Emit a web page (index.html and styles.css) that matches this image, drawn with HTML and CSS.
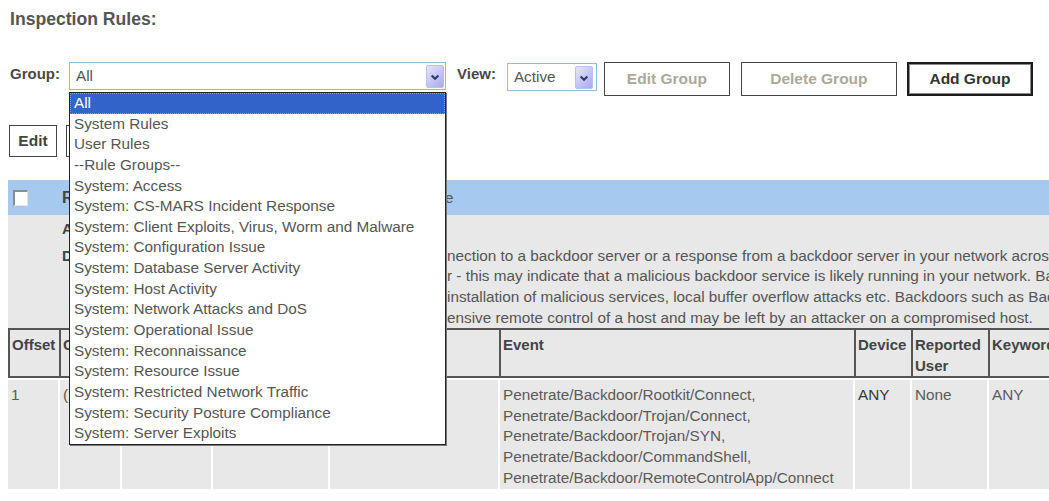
FILE: index.html
```html
<!DOCTYPE html>
<html>
<head>
<meta charset="utf-8">
<title>Inspection Rules</title>
<link rel="stylesheet" href="styles.css">
</head>
<body>
<div class="page">
  <h1 class="title">Inspection Rules:</h1>

  <div class="toolbar">
    <span class="lbl">Group:</span>
    <div class="combo combo-group">
      <div class="select">
        <span class="sel-text">All</span>
        <span class="arrow"><svg width="18" height="23" viewBox="0 0 18 23"><path d="M5.2 9.2 L9 13 L12.8 9.2" fill="none" stroke="#2b3b6e" stroke-width="2.4"/></svg></span>
      </div>
      <ul class="listbox">
        <li class="selected">All</li>
        <li>System Rules</li>
        <li>User Rules</li>
        <li>--Rule Groups--</li>
        <li>System: Access</li>
        <li>System: CS-MARS Incident Response</li>
        <li>System: Client Exploits, Virus, Worm and Malware</li>
        <li>System: Configuration Issue</li>
        <li>System: Database Server Activity</li>
        <li>System: Host Activity</li>
        <li>System: Network Attacks and DoS</li>
        <li>System: Operational Issue</li>
        <li>System: Reconnaissance</li>
        <li>System: Resource Issue</li>
        <li>System: Restricted Network Traffic</li>
        <li>System: Security Posture Compliance</li>
        <li>System: Server Exploits</li>
      </ul>
    </div>
    <span class="lbl lbl-view">View:</span>
    <div class="combo combo-view">
      <div class="select">
        <span class="sel-text">Active</span>
        <span class="arrow"><svg width="18" height="23" viewBox="0 0 18 23"><path d="M5.2 9.2 L9 13 L12.8 9.2" fill="none" stroke="#2b3b6e" stroke-width="2.4"/></svg></span>
      </div>
    </div>
    <button class="btn btn-disabled btn-edit-group">Edit Group</button>
    <button class="btn btn-disabled btn-delete-group">Delete Group</button>
    <button class="btn btn-primary btn-add-group">Add Group</button>
  </div>

  <div class="actions">
    <button class="btn btn-small">Edit</button>
    <button class="btn btn-small btn-next">Duplicate</button>
  </div>

  <div class="rule">
    <div class="rule-head">
      <span class="checkbox"></span>
      <span class="rule-name"><span class="hid-head"><b>Rule Name:</b> System Rule: Backdoor Activity - Activ</span>e</span>
    </div>
    <div class="rule-info">
      <div class="info-row">
        <span class="info-lbl">Action:</span>
        <div class="info-val">None</div>
      </div>
      <div class="info-row info-desc">
        <span class="info-lbl">Description:</span>
        <div class="info-val">
          <div class="dline"><span class="hid">This rule detects a con</span><span>nection to a backdoor server or a response from a backdoor server in your network across the perimeter</span></div>
          <div class="dline"><span class="hid">across the network perimete</span><span>r - this may indicate that a malicious backdoor service is likely running in your network. Backdoors are</span></div>
          <div class="dline"><span class="hid">installed through exploits, </span><span>installation of malicious services, local buffer overflow attacks etc. Backdoors such as Back Orifice</span></div>
          <div class="dline"><span class="hid">and NetBus provide ext</span><span>ensive remote control of a host and may be left by an attacker on a compromised host.</span></div>
        </div>
      </div>
    </div>
    <table class="rules">
      <colgroup>
        <col class="c-offset"><col class="c-open"><col class="c-src"><col class="c-dst"><col class="c-svc"><col class="c-event"><col class="c-device"><col class="c-user"><col class="c-kw"><col class="c-sev"><col class="c-count">
      </colgroup>
      <thead>
        <tr>
          <th class="first">Offset</th>
          <th>Open (</th>
          <th>Source IP</th>
          <th>Destination IP</th>
          <th>Service Name</th>
          <th>Event</th>
          <th>Device</th>
          <th>Reported User</th>
          <th>Keyword</th>
          <th>Severity</th>
          <th>Count</th>
        </tr>
      </thead>
      <tbody>
        <tr>
          <td>1</td>
          <td>(</td>
          <td>$TARGET01</td>
          <td>ANY</td>
          <td>ANY</td>
          <td>Penetrate/Backdoor/Rootkit/Connect,<br>Penetrate/Backdoor/Trojan/Connect,<br>Penetrate/Backdoor/Trojan/SYN,<br>Penetrate/Backdoor/CommandShell,<br>Penetrate/Backdoor/RemoteControlApp/Connect</td>
          <td class="dark">ANY</td>
          <td>None</td>
          <td>ANY</td>
          <td>ANY</td>
          <td>1</td>
        </tr>
      </tbody>
    </table>
  </div>
</div>
</body>
</html>
```

FILE: styles.css
```css
html, body {
  margin: 0;
  padding: 0;
  overflow: hidden;
  background: #ffffff;
}

body {
  width: 1049px;
  height: 501px;
  font-family: "Liberation Sans", Arial, sans-serif;
  font-size: 15.3px;
  color: #555555;
}

.page {
  display: flex;
  flex-direction: column;
}

.title {
  margin: 8px 0 0 10px;
  font-size: 17.6px;
  line-height: 22px;
  font-weight: bold;
  color: #555555;
}

/* toolbar */
.toolbar {
  display: flex;
  align-items: flex-start;
  margin-top: 32px;
  padding-left: 10px;
  height: 34px;
}

.lbl {
  font-weight: bold;
  font-size: 15px;
  line-height: 20px;
  color: #484848;
  margin-top: 2px;
}

.lbl-view {
  margin-left: 11px;
}

.combo {
  position: relative;
}

.combo-group {
  margin-left: 9px;
  width: 377px;
  z-index: 5;
}

.combo-view {
  margin-left: 11px;
  width: 90px;
  margin-top: 1px;
}

.select {
  display: flex;
  align-items: center;
  height: 28px;
  box-sizing: border-box;
  border: 1px solid #8fbdd2;
  background: #ffffff;
  padding-left: 6px;
}

.sel-text {
  color: #555555;
  line-height: 20px;
}

.arrow {
  display: flex;
  margin-left: auto;
  margin-right: 1px;
  width: 18px;
  height: 23px;
  box-sizing: border-box;
  border: 1px solid #b9bff0;
  border-radius: 2px;
  background: linear-gradient(135deg, #e6e6ff 0%, #c4c4f6 55%, #a9a9ea 100%);
}

.combo-view .arrow {
  margin-right: 3px;
}

.listbox {
  position: absolute;
  left: 0;
  top: 30px;
  width: 377px;
  box-sizing: border-box;
  margin: 0;
  padding: 0;
  list-style: none;
  background: #ffffff;
  border: 1px solid #222222;
  box-shadow: 1px 1px 0 #7a7a7a;
}

.listbox li {
  height: 20.65px;
  line-height: 20.65px;
  padding-left: 4px;
  white-space: nowrap;
  color: #555555;
}

.listbox li.selected {
  background: #3264c8;
  color: #ffffff;
  box-sizing: border-box;
  border: 1px dotted #c89a52;
  padding-left: 3px;
  line-height: 18.65px;
}

/* buttons */
.btn {
  font-family: "Liberation Sans", Arial, sans-serif;
  font-weight: bold;
  font-size: 15.5px;
  background: #ffffff;
  box-sizing: border-box;
  border: 1px solid #454545;
  padding: 0;
  margin: 0;
  color: #3a3a3a;
  cursor: default;
}

.btn-disabled {
  color: #aba899;
  height: 34px;
}

.btn-edit-group {
  margin-left: 7px;
  width: 126px;
}

.btn-delete-group {
  margin-left: 11px;
  width: 156px;
}

.btn-add-group {
  margin-left: 10px;
  width: 126px;
  height: 34px;
}

.btn-primary {
  border: 2px solid #1c1c1c;
  box-shadow: inset 0 0 0 1px #8a8a8a;
  color: #333333;
}

.actions {
  display: flex;
  margin-top: 29px;
  padding-left: 9px;
}

.btn-small {
  height: 32px;
  width: 48px;
  color: #444444;
}

.btn-next {
  margin-left: 9px;
  width: 96px;
}

/* rule block */
.rule {
  margin-top: 23px;
  margin-left: 8px;
  width: 1300px;
}

.rule-head {
  display: flex;
  align-items: center;
  height: 35px;
  background: #a6c9ef;
}

.checkbox {
  display: block;
  margin-left: 5px;
  width: 15px;
  height: 16px;
  box-sizing: border-box;
  background: #ffffff;
  border-style: solid;
  border-width: 2px 1px 1px 2px;
  border-color: #8c8c8c #e6e6e6 #e6e6e6 #8c8c8c;
}

.rule-name {
  display: flex;
  margin-left: 34px;
  white-space: nowrap;
  color: #555555;
}

.rule-name b {
  font-size: 16px;
  color: #444444;
}

.hid-head {
  display: inline-block;
  width: 383px;
  overflow: hidden;
}

.rule-info {
  background: #e8e8e8;
  padding: 4px 0 0 54px;
  height: 109px;
  overflow: hidden;
}

.info-row {
  display: flex;
  line-height: 20.7px;
  white-space: nowrap;
}

.info-desc {
  margin-top: 6px;
}

.info-lbl {
  width: 95px;
  font-weight: bold;
  font-size: 15px;
  color: #444444;
}

.dline {
  display: flex;
}

.hid {
  display: inline-block;
  width: 290px;
  overflow: hidden;
}

/* table */
.rules {
  border-collapse: separate;
  border-spacing: 0;
  table-layout: fixed;
  width: 1200px;
}

.c-offset { width: 52px; }
.c-open { width: 62px; }
.c-src { width: 91px; }
.c-dst { width: 117px; }
.c-svc { width: 170px; }
.c-event { width: 355px; }
.c-device { width: 57px; }
.c-user { width: 77px; }
.c-kw { width: 80px; }
.c-sev { width: 70px; }
.c-count { width: 69px; }

.rules th {
  background: #e8e8e8;
  border-style: solid;
  border-color: #555555;
  border-width: 2px 1px 2px 1px;
  text-align: left;
  vertical-align: top;
  font-size: 15px;
  font-weight: bold;
  color: #444444;
  line-height: 21px;
  padding: 4px 2px 0 2px;
  height: 46px;
  box-sizing: border-box;
  overflow: hidden;
}

.rules th.first {
  border-left-width: 2px;
}

.rules td {
  background: #e8e8e8;
  border-top: 2px solid #ffffff;
  border-right: 2px solid #ffffff;
  vertical-align: top;
  line-height: 20.65px;
  padding: 5px 2px 1px 3px;
  color: #5a5a5a;
  white-space: nowrap;
  overflow: hidden;
}

.rules td.dark {
  color: #383838;
}
```
